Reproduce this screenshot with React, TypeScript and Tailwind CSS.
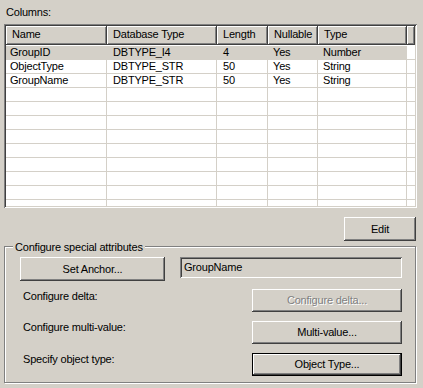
import React from 'react'

// classic win2k bevels
const raised = "shadow-[inset_-1px_-1px_0_#404040,inset_1px_1px_0_#ffffff,inset_-2px_-2px_0_#808080,inset_2px_2px_0_#d4d0c8]"
const sunken = "shadow-[inset_1px_1px_0_#808080,inset_-1px_-1px_0_#ffffff,inset_2px_2px_0_#404040,inset_-2px_-2px_0_#d4d0c8]"
const headerBevel = "shadow-[inset_-1px_-1px_0_#404040,inset_1px_1px_0_#ffffff,inset_-2px_-2px_0_#808080]"

const columns = [
  { label: "Name", w: "w-[101px]", pad: "pl-[4px]" },
  { label: "Database Type", w: "w-[110px]", pad: "pl-[6px]" },
  { label: "Length", w: "w-[51px]", pad: "pl-[6px]" },
  { label: "Nullable", w: "w-[50px]", pad: "pl-[5px]" },
  { label: "Type", w: "w-[89px]", pad: "pl-[5px]" },
]

const rows: string[][] = [
  ["GroupID", "DBTYPE_I4", "4", "Yes", "Number"],
  ["ObjectType", "DBTYPE_STR", "50", "Yes", "String"],
  ["GroupName", "DBTYPE_STR", "50", "Yes", "String"],
]

const Btn = ({ children, className = "", disabled = false, isDefault = false }: { children: React.ReactNode; className?: string; disabled?: boolean; isDefault?: boolean }) => (
  <div className={"shrink-0 bg-[#d4d0c8] flex items-center justify-center " + (isDefault ? "border border-black " : "") + className}>
    <div className={"w-full h-full flex items-center justify-center " + raised}>
      <span className={disabled ? "text-[#808080] [text-shadow:1px_1px_0_#ffffff]" : ""}>{children}</span>
    </div>
  </div>
)

export default function App() {
  const bodyRows = Array.from({ length: 12 }, (_, i) => rows[i] ?? null)

  return (
    <div className="w-[423px] h-[388px] bg-[#d4d0c8] text-black text-[11px] leading-[13px] tracking-[-0.2px] font-['Liberation_Sans',Arial,sans-serif] px-[4px] overflow-hidden flex flex-col">
      <div className="h-[24px] pt-[6px] pl-[2px] shrink-0">Columns:</div>

      <div className={"h-[184px] w-[413px] p-[2px] bg-white shrink-0 " + sunken}>
        <div className="h-full overflow-hidden flex flex-col">
          <div className="flex h-[19px] shrink-0 bg-[#d4d0c8]">
            {columns.map(c => (
              <div key={c.label} className={c.w + " shrink-0 pl-[6px] pt-[2px] whitespace-nowrap " + headerBevel}>{c.label}</div>
            ))}
            <div className={"flex-1 " + headerBevel} />
          </div>
          <div className="h-[1px] shrink-0" />
          {bodyRows.map((r, i) => (
            <div key={i} className="flex h-[14px] shrink-0">
              {columns.map((c, j) => (
                <div key={c.label} className={c.w + " " + c.pad + " shrink-0 border-r border-b border-[#d4d0c8] whitespace-nowrap overflow-hidden " + (i === 0 ? "bg-[#d4d0c8]" : "")}>
                  {r ? r[j] : ""}
                </div>
              ))}
              <div className="flex-1 border-b border-[#d4d0c8]" />
            </div>
          ))}
        </div>
      </div>

      <Btn className="self-end mt-[9px] mr-[3px] w-[72px] h-[24px]">Edit</Btn>

      <div className="relative mt-[5px] h-[137px] w-[412px] shrink-0 border border-[#808080] shadow-[1px_1px_0_#ffffff,inset_1px_1px_0_#ffffff] pt-[10px] pl-[15px] pr-[13px] flex flex-col">
        <span className="absolute left-[8px] top-[-6px] bg-[#d4d0c8] px-[2px]">Configure special attributes</span>

        <div className="flex items-start h-[24px]">
          <Btn className="w-[145px] h-[24px]">Set Anchor...</Btn>
          <div className={"ml-[15px] flex-1 h-[21px] pl-[4px] pt-[4px] bg-[#d4d0c8] " + sunken}>GroupName</div>
        </div>

        <div className="flex items-start mt-[8px]">
          <span className="pl-[3px] mt-[1px]">Configure delta:</span>
          <Btn disabled className="ml-auto w-[150px] h-[23px]">Configure delta...</Btn>
        </div>

        <div className="flex items-start mt-[9px]">
          <span className="pl-[3px]">Configure multi-value:</span>
          <Btn className="ml-auto w-[150px] h-[23px]">Multi-value...</Btn>
        </div>

        <div className="flex items-start mt-[9px]">
          <span className="pl-[3px]">Specify object type:</span>
          <Btn isDefault className="ml-auto w-[150px] h-[23px]">Object Type...</Btn>
        </div>
      </div>
    </div>
  )
}
